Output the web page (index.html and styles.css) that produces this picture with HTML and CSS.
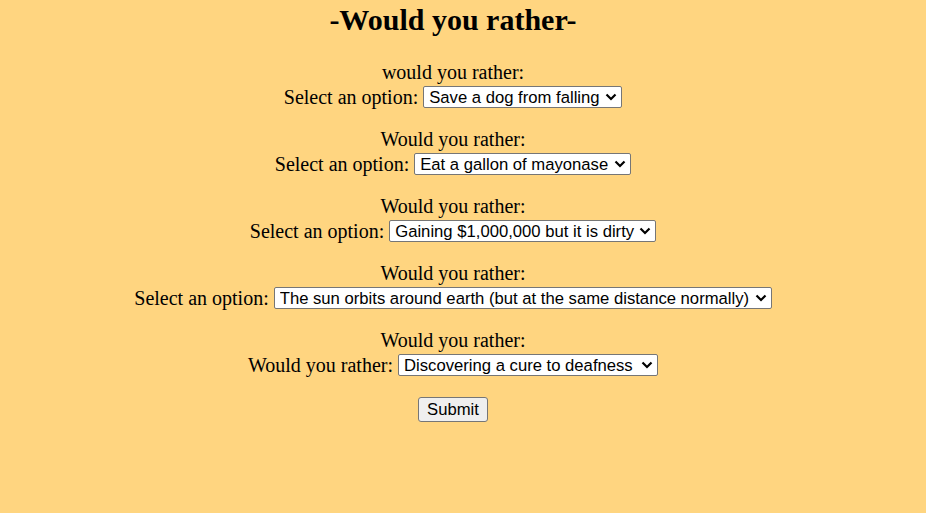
FILE: index.html
```html
<!DOCTYPE html>
<html>
<head>
<meta charset="utf-8">
<title>Would you rather</title>
<link rel="stylesheet" href="styles.css">
</head>
<body>
<main class="page">
  <h2 class="title">-Would you rather-</h2>
  <form class="quiz">
    <div class="block">
      <div class="q">would you rather:</div>
      <div class="row">
        <label for="s1">Select an option:</label>
        <select id="s1" class="sel w1"><option>Save a dog from falling</option><option>Save a cat from drowning</option></select>
      </div>
    </div>
    <div class="block">
      <div class="q">Would you rather:</div>
      <div class="row">
        <label for="s2">Select an option:</label>
        <select id="s2" class="sel w2"><option>Eat a gallon of mayonase</option><option>Eat a gallon of ketchup</option></select>
      </div>
    </div>
    <div class="block">
      <div class="q">Would you rather:</div>
      <div class="row">
        <label for="s3">Select an option:</label>
        <select id="s3" class="sel w3"><option>Gaining $1,000,000 but it is dirty</option><option>Gaining $500,000 clean</option></select>
      </div>
    </div>
    <div class="block">
      <div class="q">Would you rather:</div>
      <div class="row">
        <label for="s4">Select an option:</label>
        <select id="s4" class="sel w4"><option>The sun orbits around earth (but at the same distance normally)</option><option>The earth is flat</option></select>
      </div>
    </div>
    <div class="block">
      <div class="q">Would you rather:</div>
      <div class="row">
        <label for="s5">Would you rather:</label>
        <select id="s5" class="sel w5"><option>Discovering a cure to deafness</option><option>Discovering a cure to blindness</option></select>
      </div>
    </div>
    <div class="actions">
      <button type="button" class="submit">Submit</button>
    </div>
  </form>
</main>
</body>
</html>
```

FILE: styles.css
```css
html, body {
  margin: 0;
  padding: 0;
}
body {
  background: #ffd580;
  color: #000;
  font-family: "Liberation Serif", "Times New Roman", serif;
  font-size: 20px;
  width: 926px;
  height: 513px;
  overflow: hidden;
}
.page {
  width: 906px;
  padding-top: 3px;
  text-align: center;
}
.title {
  margin: 0;
  font-size: 30px;
  font-weight: bold;
  line-height: 34px;
}
.quiz {
  margin-top: 24px;
}
.block {
  margin-bottom: 18px;
}
.q {
  line-height: 23px;
  height: 23px;
}
.row {
  display: flex;
  justify-content: center;
  align-items: center;
  gap: 5px;
  height: 26px;
  line-height: 23px;
}
.sel {
  -webkit-appearance: none;
  appearance: none;
  box-sizing: border-box;
  height: 22px;
  font-family: "Liberation Sans", Arial, sans-serif;
  font-size: 16.67px;
  line-height: 19px;
  color: #000;
  background-color: #fff;
  background-image: url("data:image/svg+xml;utf8,<svg xmlns='http://www.w3.org/2000/svg' width='12' height='8' viewBox='0 0 12 8'><path d='M1.5 1.5 L6 6 L10.5 1.5' fill='none' stroke='%23000' stroke-width='2.2'/></svg>");
  background-repeat: no-repeat;
  background-position: right 4px center;
  background-size: 12px 8px;
  border: 1px solid #767676;
  border-radius: 2px;
  padding: 1px 20px 0 5px;
  text-align: left;
}
.w1 { width: 199px; }
.w2 { width: 217px; }
.w3 { width: 267px; }
.w4 { width: 498px; }
.w5 { width: 260px; }
.actions {
  display: flex;
  justify-content: center;
  padding-top: 1px;
}
.submit {
  box-sizing: border-box;
  width: 70px;
  height: 25px;
  font-family: "Liberation Sans", Arial, sans-serif;
  font-size: 16.67px;
  color: #000;
  background: #efefef;
  border: 1px solid #767676;
  border-radius: 3px;
  padding: 0 6px;
}
```
